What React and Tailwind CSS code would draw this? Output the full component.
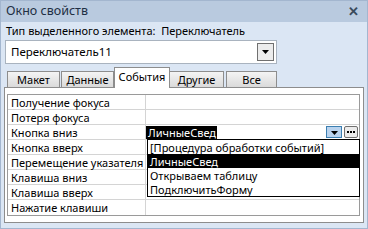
import React from "react";

const rows = [
  "Получение фокуса",
  "Потеря фокуса",
  "Кнопка вниз",
  "Кнопка вверх",
  "Перемещение указателя",
  "Клавиша вниз",
  "Клавиша вверх",
  "Нажатие клавиши",
];

function Arrow() {
  return (
    <svg width="7" height="4" viewBox="0 0 7 4">
      <path d="M0 0 H7 L3.5 4 Z" fill="#000" />
    </svg>
  );
}

export default function App() {
  return (
    <div
      className="w-[368px] h-[229px] bg-[#dbe6f4] border border-[#a3b6cf] flex flex-col overflow-hidden text-[11px] text-black leading-none whitespace-nowrap"
      style={{ fontFamily: '"Noto Sans", "Open Sans", sans-serif' }}
    >
      <div className="h-[21px] bg-[#b9cadf] flex items-center justify-between pl-[5px] pr-[8px] shrink-0">
        <span className="text-[12.5px] text-[#1f2f44]">Окно свойств</span>
        <span className="text-[13px] font-bold text-[#3a4a5c]">✕</span>
      </div>
      <div className="h-[17px] flex items-center pl-[5px] shrink-0">
        Тип выделенного элемента:&nbsp;&nbsp;Переключатель
      </div>
      <div className="mt-[1px] ml-[4px] w-[272px] h-[24px] bg-white border border-[#a9b3bf] flex items-center justify-between pl-[5px] pr-[2px] shrink-0">
        <span className="text-[11.5px]">Переключатель11</span>
        <div className="w-[17px] h-[18px] border border-[#707070] bg-[#ececec] flex items-center justify-center">
          <Arrow />
        </div>
      </div>
      <div className="mt-[2px] ml-[3px] flex items-end h-[21px] shrink-0 relative z-10">
        <div className="ml-[3px] w-[53px] h-[16px] border border-[#8d8d8d] border-b-0 bg-gradient-to-b from-[#f4f4f4] to-[#dadada] flex items-center justify-center">Макет</div>
        <div className="ml-[1px] w-[53px] h-[16px] border border-[#8d8d8d] border-b-0 bg-gradient-to-b from-[#f4f4f4] to-[#dadada] flex items-center justify-center">Данные</div>
        <div className="w-[56px] h-[21px] border border-[#8d8d8d] border-b-0 bg-white flex items-center justify-center mb-[-1px] pb-[3px]">События</div>
        <div className="w-[54px] h-[16px] border border-[#8d8d8d] border-b-0 border-l-0 bg-gradient-to-b from-[#f4f4f4] to-[#dadada] flex items-center justify-center">Другие</div>
        <div className="ml-[2px] w-[51px] h-[16px] border border-[#8d8d8d] border-b-0 bg-gradient-to-b from-[#f4f4f4] to-[#dadada] flex items-center justify-center">Все</div>
      </div>
      <div className="ml-[3px] w-[360px] h-[136px] bg-white border border-[#8d8d8d] pt-[6px] pl-[2px] shrink-0">
        <div className="w-[353px] border border-[#9a9a9a] relative">
          {rows.map((r, i) => (
            <div
              key={r}
              className={`flex h-[15px] ${i < rows.length - 1 ? "border-b border-[#d4d4d4]" : ""}`}
            >
              <div className="w-[138px] border-r border-[#d4d4d4] pl-[3px] flex items-center">{r}</div>
              <div className="flex-1 flex items-center">
                {i === 2 && (
                  <div className="flex-1 flex items-center justify-between h-full">
                    <span className="bg-black text-white h-[13px] pl-[2px] pr-[1px] flex items-center">ЛичныеСвед</span>
                    <div className="flex items-center gap-[2px] pr-[1px]">
                      <div className="w-[16px] h-[12px] bg-[#b9d3ee] border border-[#3c7fb1] flex items-end justify-center pb-[2px]">
                        <Arrow />
                      </div>
                      <div className="w-[14px] h-[12px] bg-[#ececec] border border-[#707070] rounded-[2px] flex items-center justify-center gap-[1px]">
                        <span className="w-[2px] h-[2px] bg-black" />
                        <span className="w-[2px] h-[2px] bg-black" />
                        <span className="w-[2px] h-[2px] bg-black" />
                      </div>
                    </div>
                  </div>
                )}
              </div>
            </div>
          ))}
          <div className="absolute left-[139px] top-[44px] w-[213px] bg-white border border-black flex flex-col">
            <div className="h-[14px] pl-[2px] flex items-center">[Процедура обработки событий]</div>
            <div className="h-[14px] pl-[2px] flex items-center bg-black text-white">ЛичныеСвед</div>
            <div className="h-[14px] pl-[2px] flex items-center">Открываем таблицу</div>
            <div className="h-[14px] pl-[2px] flex items-center">ПодключитьФорму</div>
          </div>
        </div>
      </div>
    </div>
  );
}
